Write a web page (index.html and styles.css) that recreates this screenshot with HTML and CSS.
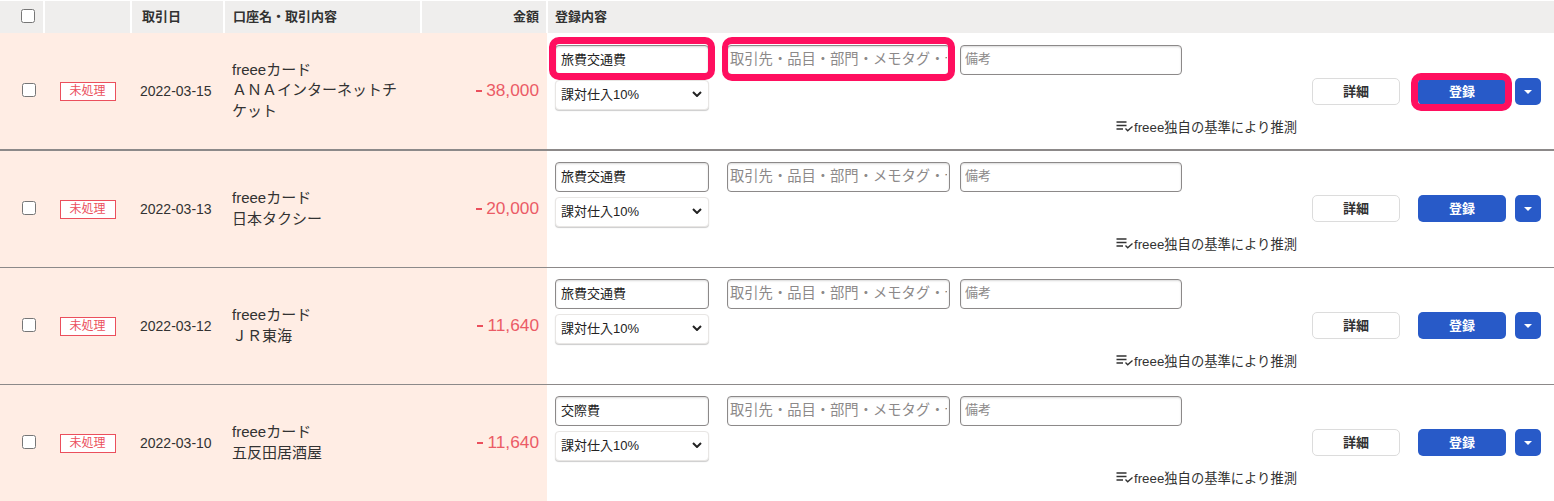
FILE: index.html
```html
<!DOCTYPE html>
<html lang="ja">
<head>
    <meta charset="UTF-8" />
    <title>自動で経理</title>
    <link rel="stylesheet" href="styles.css">
</head>
<body>
    <!-- Header -->
    <div class="row row-head">
        <div class="head-cell cell-check"><input type="checkbox" class="check" /></div>
        <div class="head-cell"></div>
        <div class="head-cell head-date">取引日</div>
        <div class="head-cell head-name">口座名・取引内容</div>
        <div class="head-cell head-amount">金額</div>
        <div class="head-cell head-content">登録内容</div>
    </div>

    <!-- Row 1 -->
    <div class="row row-entry row-first">
        <div class="cell cell-check"><input type="checkbox" class="check" /></div>
        <div class="cell cell-status"><span class="status">未処理</span></div>
        <div class="cell cell-date">2022-03-15</div>
        <div class="cell cell-name"><div>freeeカード<br />ＡＮＡインターネットチケット</div></div>
        <div class="cell cell-amount"><span class="minus"></span>38,000</div>
        <div class="cell-content">
            <div class="fields">
                <div class="field-col">
                    <div class="marked marked-account"><input type="text" class="input input-account" value="旅費交通費" /></div>
                    <div class="select-box">課対仕入10%<svg class="chevron" viewBox="0 0 10 6"><path d="M1 1l4 4 4-4" /></svg></div>
                </div>
                <div class="marked marked-partner"><input type="text" class="input input-partner" placeholder="取引先・品目・部門・メモタグ・セグメント" /></div>
                <input type="text" class="input input-note" placeholder="備考" />
            </div>
            <div class="actions">
                <button class="btn-detail" type="button">詳細</button>
                <div class="marked marked-save"><button class="btn-save" type="button">登録</button></div>
                <button class="btn-more" type="button"><span class="caret"></span></button>
            </div>
            <div class="guess"><svg class="guess-icon" viewBox="0 0 18 12"><path class="guess-lines" d="M0.5 2h10M0.5 5.5h10M0.5 9h6.5" /><path d="M9.5 8.5l2.2 2.2 4.8-4.2" /></svg>freee独自の基準により推測</div>
        </div>
    </div>

    <!-- Row 2 -->
    <div class="row row-entry">
        <div class="cell cell-check"><input type="checkbox" class="check" /></div>
        <div class="cell cell-status"><span class="status">未処理</span></div>
        <div class="cell cell-date">2022-03-13</div>
        <div class="cell cell-name"><div>freeeカード<br />日本タクシー</div></div>
        <div class="cell cell-amount"><span class="minus"></span>20,000</div>
        <div class="cell-content">
            <div class="fields">
                <div class="field-col">
                    <input type="text" class="input input-account" value="旅費交通費" />
                    <div class="select-box">課対仕入10%<svg class="chevron" viewBox="0 0 10 6"><path d="M1 1l4 4 4-4" /></svg></div>
                </div>
                <input type="text" class="input input-partner" placeholder="取引先・品目・部門・メモタグ・セグメント" />
                <input type="text" class="input input-note" placeholder="備考" />
            </div>
            <div class="actions">
                <button class="btn-detail" type="button">詳細</button>
                <button class="btn-save" type="button">登録</button>
                <button class="btn-more" type="button"><span class="caret"></span></button>
            </div>
            <div class="guess"><svg class="guess-icon" viewBox="0 0 18 12"><path class="guess-lines" d="M0.5 2h10M0.5 5.5h10M0.5 9h6.5" /><path d="M9.5 8.5l2.2 2.2 4.8-4.2" /></svg>freee独自の基準により推測</div>
        </div>
    </div>

    <!-- Row 3 -->
    <div class="row row-entry">
        <div class="cell cell-check"><input type="checkbox" class="check" /></div>
        <div class="cell cell-status"><span class="status">未処理</span></div>
        <div class="cell cell-date">2022-03-12</div>
        <div class="cell cell-name"><div>freeeカード<br />ＪＲ東海</div></div>
        <div class="cell cell-amount"><span class="minus"></span>11,640</div>
        <div class="cell-content">
            <div class="fields">
                <div class="field-col">
                    <input type="text" class="input input-account" value="旅費交通費" />
                    <div class="select-box">課対仕入10%<svg class="chevron" viewBox="0 0 10 6"><path d="M1 1l4 4 4-4" /></svg></div>
                </div>
                <input type="text" class="input input-partner" placeholder="取引先・品目・部門・メモタグ・セグメント" />
                <input type="text" class="input input-note" placeholder="備考" />
            </div>
            <div class="actions">
                <button class="btn-detail" type="button">詳細</button>
                <button class="btn-save" type="button">登録</button>
                <button class="btn-more" type="button"><span class="caret"></span></button>
            </div>
            <div class="guess"><svg class="guess-icon" viewBox="0 0 18 12"><path class="guess-lines" d="M0.5 2h10M0.5 5.5h10M0.5 9h6.5" /><path d="M9.5 8.5l2.2 2.2 4.8-4.2" /></svg>freee独自の基準により推測</div>
        </div>
    </div>

    <!-- Row 4 -->
    <div class="row row-entry">
        <div class="cell cell-check"><input type="checkbox" class="check" /></div>
        <div class="cell cell-status"><span class="status">未処理</span></div>
        <div class="cell cell-date">2022-03-10</div>
        <div class="cell cell-name"><div>freeeカード<br />五反田居酒屋</div></div>
        <div class="cell cell-amount"><span class="minus"></span>11,640</div>
        <div class="cell-content">
            <div class="fields">
                <div class="field-col">
                    <input type="text" class="input input-account" value="交際費" />
                    <div class="select-box">課対仕入10%<svg class="chevron" viewBox="0 0 10 6"><path d="M1 1l4 4 4-4" /></svg></div>
                </div>
                <input type="text" class="input input-partner" placeholder="取引先・品目・部門・メモタグ・セグメント" />
                <input type="text" class="input input-note" placeholder="備考" />
            </div>
            <div class="actions">
                <button class="btn-detail" type="button">詳細</button>
                <button class="btn-save" type="button">登録</button>
                <button class="btn-more" type="button"><span class="caret"></span></button>
            </div>
            <div class="guess"><svg class="guess-icon" viewBox="0 0 18 12"><path class="guess-lines" d="M0.5 2h10M0.5 5.5h10M0.5 9h6.5" /><path d="M9.5 8.5l2.2 2.2 4.8-4.2" /></svg>freee独自の基準により推測</div>
        </div>
    </div>
</body>
</html>
```

FILE: styles.css
```css
/* Global */
*,
*::before,
*::after {
    box-sizing: border-box;
}

html,
body {
    margin: 0;
    padding: 0;
    overflow: hidden;
}

body {
    font-family: 'Liberation Sans', 'Noto Sans CJK JP', sans-serif;
    font-size: 14px;
    color: #323232;
    background: #fff;
}

/* Grid shared by header and rows */
.row {
    display: grid;
    grid-template-columns: 45px 87px 93px 197px 125px 1fr;
}

/* Header */
.row-head {
    height: 33px;
    padding-top: 1px;
}

.head-cell {
    display: flex;
    align-items: center;
    padding-bottom: 3px;
    background: #efeeed;
    border-right: 2px solid #fff;
    font-size: 13px;
    font-weight: 700;
}

.head-date {
    padding-left: 10px;
}

.head-name {
    padding-left: 8px;
}

.head-amount {
    justify-content: flex-end;
    padding-right: 7px;
    border-right-width: 1px;
}

.head-content {
    margin-left: 1px;
    padding-left: 7px;
    border-right: 0;
}

/* Rows */
.row-entry {
    height: 117px;
    border-bottom: 1px solid #8c8989;
}

.row-first {
    height: 118px;
    border-bottom-width: 2px;
}

.cell {
    display: flex;
    align-items: center;
    background: #ffede4;
    min-width: 0;
}

.cell-check {
    justify-content: center;
    padding-left: 12px;
}

.cell.cell-check {
    padding-bottom: 2px;
}

.check {
    width: 14px;
    height: 14px;
    margin: 0;
}

.cell-status {
    justify-content: center;
    padding-right: 2px;
}

.status {
    width: 56px;
    height: 19px;
    line-height: 17px;
    text-align: center;
    font-size: 12px;
    color: #eb4f5c;
    background: #fff;
    border: 1px solid #eb4f5c;
}

.cell-date {
    padding: 0 0 1px 8px;
    font-size: 14px;
}

.cell-name {
    padding: 0 20px 1px 7px;
    font-size: 15px;
    line-height: 20.5px;
}

.cell-amount {
    justify-content: flex-end;
    padding: 0 8px 1px 0;
    font-size: 17.3px;
    color: #eb5b66;
}

.minus {
    width: 6px;
    height: 2px;
    margin-right: 4px;
    background: #eb4f5c;
}

/* Registration column */
.cell-content {
    display: grid;
    grid-template-columns: 1fr auto;
    grid-template-rows: auto auto;
    align-content: start;
    margin-left: 1px;
    padding: 11px 13px 0 7px;
}

.row-first .cell-content {
    padding-top: 12px;
}

.fields {
    display: flex;
    align-items: flex-start;
}

.field-col {
    display: flex;
    flex-direction: column;
    gap: 5px;
    width: 154px;
    margin-right: 18px;
}

.input {
    display: block;
    height: 30px;
    padding: 0 5px 3px;
    border: 1px solid #8c8989;
    border-radius: 4px;
    font-size: 13px;
    font-family: inherit;
    color: #222;
    background: #fff;
    box-shadow: inset 0 1px 2px rgba(0, 0, 0, 0.15);
}

.input::placeholder {
    color: #8c8989;
}

.input-account {
    width: 154px;
}

.input-partner {
    width: 223px;
    padding: 0 2px 3px;
    font-size: 14.3px;
}

.input-note {
    width: 222px;
    margin-left: 10px;
    padding: 0 4px 3px;
}

.select-box {
    display: flex;
    align-items: center;
    justify-content: space-between;
    height: 30px;
    padding: 0 6px 3px 5px;
    border: 1px solid #e8e6e4;
    border-radius: 4px;
    font-size: 13px;
    color: #222;
    background: #fff;
    box-shadow: 0 1px 1px rgba(0, 0, 0, 0.2);
}

.chevron {
    width: 10px;
    height: 6px;
    fill: none;
    stroke: #222;
    stroke-width: 2;
}

/* Buttons */
.actions {
    display: flex;
    align-items: flex-start;
    padding-top: 33px;
}

.btn-detail,
.btn-save,
.btn-more {
    display: block;
    height: 27px;
    padding: 0 0 2px;
    border-radius: 5px;
    font-family: inherit;
    font-size: 13px;
    font-weight: 700;
}

.btn-detail {
    width: 88px;
    margin-right: 18px;
    color: #323232;
    background: #fff;
    border: 1px solid #dcdcdc;
}

.btn-save {
    width: 88px;
    margin-right: 9px;
    color: #fff;
    background: #285ac8;
    border: 0;
}

.btn-more {
    width: 26px;
    background: #285ac8;
    border: 0;
}

.caret {
    display: inline-block;
    border: 4px solid transparent;
    border-top: 4px solid #fff;
    border-bottom: 0;
    vertical-align: middle;
}

/* Guess note */
.guess {
    grid-column: 1;
    justify-self: end;
    display: flex;
    align-items: center;
    height: 18px;
    margin: 7px 15px 0 0;
    font-size: 13.3px;
    white-space: nowrap;
}

.guess-icon {
    width: 18px;
    height: 12px;
    fill: none;
    stroke: #323232;
    stroke-width: 1.4;
}

.guess-lines {
    stroke-width: 1.7;
}

/* Red highlight frames, drawn over the controls */
.marked {
    position: relative;
}

.marked::after {
    content: "";
    position: absolute;
    border: 7px solid #ff0f5f;
    border-radius: 10px;
    pointer-events: none;
}

.marked-account::after {
    inset: -8px -6px -5px -6px;
}

.marked-partner::after {
    inset: -8px -5px -6px -5px;
    border-left-width: 6px;
}

.marked-save::after {
    inset: -5px 3px -6px -7px;
}
```
